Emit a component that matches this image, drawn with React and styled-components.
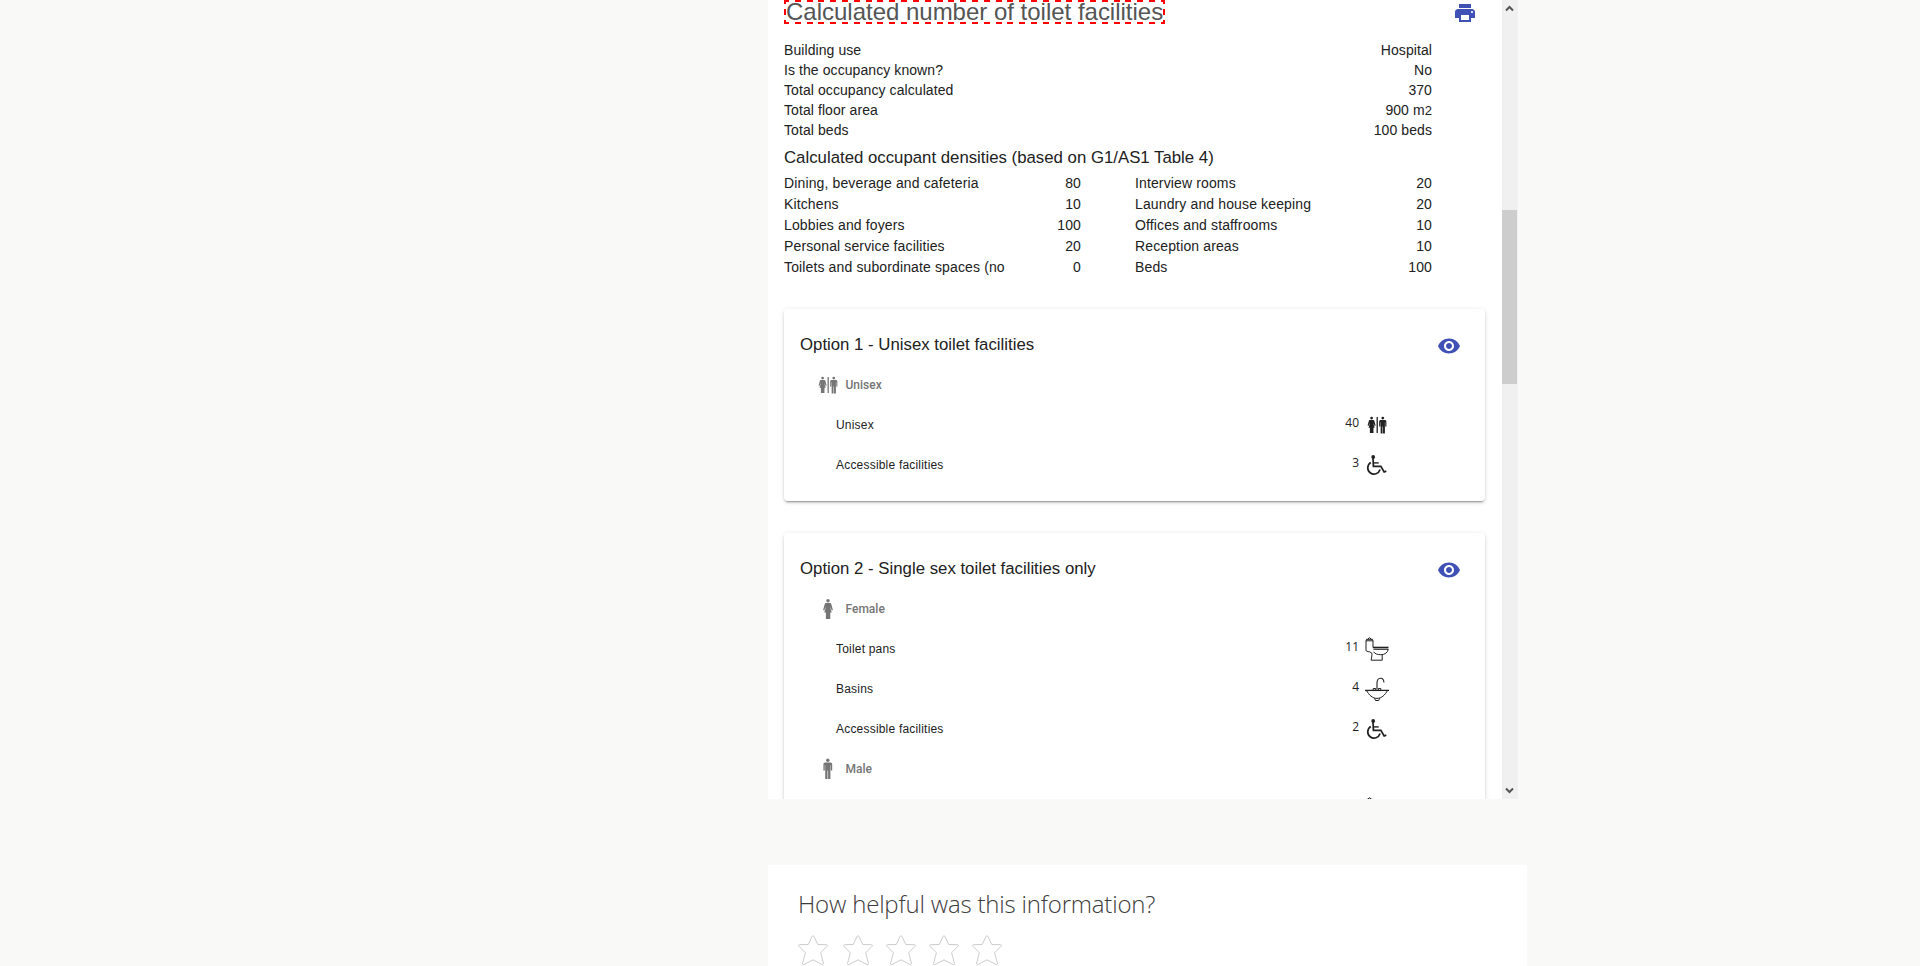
import React from 'react';
import styled, { createGlobalStyle } from 'styled-components';

const Global = createGlobalStyle`
  *, *::before, *::after { box-sizing: border-box; }
  body { margin: 0; background: #f9f9f7; overflow: hidden; }
`;

const Page = styled.main`
  height: 966px;
  padding-left: 768px;
  overflow: hidden;
  background: #f9f9f7;
  color: #212121;
  font-family: 'Liberation Sans', Arial, sans-serif;
`;

const Calculator = styled.section`
  display: flex;
  width: 750px;
  height: 799px;
  overflow: hidden;
  background: #fff;
`;

const Content = styled.div`
  flex: 1;
  min-width: 0;
  padding: 0 17px 0 16px;
`;

const Header = styled.header`
  display: flex;
  justify-content: space-between;
  align-items: flex-start;
  height: 40px;
  padding-right: 8.5px;
`;

const Title = styled.h1`
  --across: repeating-linear-gradient(90deg, #f00 0 6px, transparent 6px 11.81px);
  --down: repeating-linear-gradient(180deg, #f00 0 5px, transparent 5px 10.5px);
  margin: 0;
  width: 381px;
  height: 24px;
  padding: 2px;
  background:
    var(--across) -1px 0 / 383px 2px no-repeat,
    var(--across) -1px 100% / 383px 2px no-repeat,
    var(--down) 0 -1px / 2px 26px no-repeat,
    var(--down) 100% -1px / 2px 26px no-repeat;
  color: #555;
  font-size: 24px;
  font-weight: 400;
  line-height: 20px;
  letter-spacing: -0.01px;
  white-space: nowrap;
`;

const IconButton = styled.button`
  display: block;
  width: 24px;
  height: 24px;
  margin: ${(p) => p.$top || 0}px 0 0;
  padding: 0;
  border: 0;
  background: none;
  color: #3f51b5;

  svg { display: block; width: 24px; height: 24px; fill: currentColor; }
`;

const Summary = styled.dl`
  margin: 0;
  padding-right: 53px;
  font-size: 14px;
  line-height: 20px;
  letter-spacing: 0.08px;
`;

const SummaryRow = styled.div`
  display: flex;
  justify-content: space-between;

  dt, dd { margin: 0; white-space: nowrap; }
  small { font-size: 13px; line-height: 1; }
`;

const Subtitle = styled.h2`
  margin: 0;
  padding-top: 6px;
  height: 33px;
  font-size: 16.8px;
  font-weight: 400;
  line-height: 24px;
`;

const Densities = styled.div`
  display: grid;
  grid-template-columns: 297px 297px;
  column-gap: 54px;
  padding-right: 53px;
  height: 136px;
`;

const DensityList = styled(Summary)`
  padding: 0;
  line-height: 21px;
  letter-spacing: 0.13px;
`;

const Card = styled.article`
  margin-bottom: 32px;
  padding: 0 16px 16px;
  border-radius: 4px;
  background: #fff;
  box-shadow: 0 3px 1px -2px rgba(0, 0, 0, 0.2), 0 2px 2px 0 rgba(0, 0, 0, 0.14),
    0 1px 5px 0 rgba(0, 0, 0, 0.12);
`;

const CardHeader = styled.header`
  display: flex;
  justify-content: space-between;
  height: 56px;
  padding-right: 8.5px;

  h3 {
    margin: 0;
    padding-top: 24px;
    font-size: 16.8px;
    font-weight: 400;
    line-height: 24px;
  }
`;

const GroupHeading = styled.div`
  display: flex;
  align-items: center;
  height: 40px;
  padding-left: 16px;
  gap: 5.5px;
  color: #757575;
  font: 500 12px/16px Roboto, sans-serif;

  svg { display: block; width: 24px; height: 24px; }
`;

const FacilityRow = styled.div`
  display: flex;
  align-items: center;
  height: 40px;
  padding: 0 80px 0 36px;
  font-size: 12px;
  line-height: 16px;
  letter-spacing: 0.2px;
`;

const Count = styled.span`
  margin: 0 6px 4px auto;
  font-family: 'Open Sans', sans-serif;
  font-size: 12px;
  letter-spacing: 0;
`;

const FacilityIcon = styled.svg`
  display: block;
  width: 24px;
  height: 24px;
`;

const Scrollbar = styled.div`
  display: flex;
  flex-direction: column;
  justify-content: space-between;
  width: 16px;
  background: #f0f0f0;

  svg { display: block; width: 15px; height: 16px; fill: none; stroke: #555; stroke-width: 2; }
`;

const Track = styled.div`
  flex: 1;
  padding-top: 194px;
`;

const Thumb = styled.div`
  width: 15px;
  height: 174px;
  background: #cdcdcd;
`;

const Feedback = styled.section`
  width: 759px;
  height: 120px;
  margin-top: 66px;
  padding: 21px 30px 0;
  background: #fff;

  h2 {
    margin: 0;
    height: 49px;
    color: #3c3c3c;
    font: 300 24px/36px 'Open Sans', sans-serif;
    letter-spacing: -0.19px;
    white-space: nowrap;
  }
`;

const Stars = styled.div`
  display: flex;
  gap: 13px;

  svg { display: block; width: 30px; height: 31px; fill: #fff; stroke: #ccc; }
  svg:first-child { margin-right: 2px; }
`;

const Woman = ({ x = 0, y = 0, s = 1 }) => (
  <g transform={`translate(${x} ${y}) scale(${s})`} fill="currentColor">
    <circle cx="5" cy="1.8" r="1.7" />
    <path d="M3.2 4h3.6c.9 0 1.3.5 1.5 1.2L9.9 11l-1.1.5-1.4-3.500v1.100l1.300 4.400H7.300V20H2.900v-6.500H1.300l1.300-4.400V8l-1.400 3.500L.1 11l1.600-5.800C1.900 4.500 2.300 4 3.200 4z" />
  </g>
);

const Man = ({ x = 0, y = 0, s = 1 }) => (
  <g transform={`translate(${x} ${y}) scale(${s})`} fill="currentColor">
    <circle cx="4.6" cy="1.8" r="1.7" />
    <path d="M2.2 4H7c1.2 0 2 .8 2 2v6H7.6V6.8h-.4V20.5H4.9V12h-.6v8.500H2V6.8h-.4V12H.2V6c0-1.200.8-2 2-2z" />
  </g>
);

const icons = {
  unisex: (
    <>
      <Woman x={2.5} y={3.6} s={0.82} />
      <path d="M12.200 4v16" stroke="currentColor" strokeWidth="1.300" />
      <Man x={14} y={3.6} s={0.82} />
    </>
  ),
  female: <Woman x={7} y={2} />,
  male: <Man x={7.2} y={1.5} />,
  accessible: (
    <g fill="none" stroke="currentColor" transform="translate(-.5 -.4)">
      <circle cx="8.700" cy="4.400" r="1.900" fill="currentColor" stroke="none" />
      <path d="M8.500 5.500l.4 8.200h7.500l3.200 5.700 2.200-.9" strokeWidth="1.700" />
      <path d="M9 10.300h5.200" strokeWidth="1.400" />
      <path d="M6.300 9.800A6.300 6.300 0 1 0 15.600 17" strokeWidth="1.700" />
    </g>
  ),
  pan: (
    <g fill="none" stroke="currentColor" strokeWidth="1">
      <path d="M8 10.500V3.800H1v9.400c0 1 1.500 1.400 3.600 1.600L6.700 16c.7 1.500-.2 4-.5 7.200h11V18M1 3.800l.6-1.500h5.800L8 3.800M2.500 2.300L4.500.7l2 1.600" />
      <path d="M8 10.500h15.500" strokeWidth="1.600" />
      <path d="M8.500 12.300h14.800c-.8 3.400-3.500 5.400-7.500 5.400-3.300 0-6-.8-7.300-3" />
    </g>
  ),
  basin: (
    <g fill="none" stroke="currentColor" strokeWidth="1">
      <path d="M0 13.400h24" strokeWidth="1.300" />
      <path d="M1.500 13.500C4 18 7.500 21.400 12 21.400S20 18 22.500 13.500M9.500 21.200l1 2.300h3.200l1-2.300" />
      <path d="M12 12.500V6c0-3 1.200-4.800 3.500-4.800 2.200 0 3.400 1.500 3.400 4.300" strokeWidth="1.100" />
      <path d="M8.200 13v-1.500h2.500V13M13.400 13v-1.500h2.400V13" strokeWidth="1" />
    </g>
  ),
};

const Glyph = ({ name }) => (
  <FacilityIcon viewBox="0 0 24 24" aria-hidden="true">{icons[name]}</FacilityIcon>
);

const summary = [
  ['Building use', 'Hospital'],
  ['Is the occupancy known?', 'No'],
  ['Total occupancy calculated', '370'],
  ['Total floor area', <>900 m<small>2</small></>],
  ['Total beds', '100 beds'],
];

const densities = [
  [
    ['Dining, beverage and cafeteria', '80'],
    ['Kitchens', '10'],
    ['Lobbies and foyers', '100'],
    ['Personal service facilities', '20'],
    ['Toilets and subordinate spaces (no', '0'],
  ],
  [
    ['Interview rooms', '20'],
    ['Laundry and house keeping', '20'],
    ['Offices and staffrooms', '10'],
    ['Reception areas', '10'],
    ['Beds', '100'],
  ],
];

const options = [
  {
    title: 'Option 1 - Unisex toilet facilities',
    groups: [
      { name: 'Unisex', icon: 'unisex', rows: [['Unisex', 40, 'unisex'], ['Accessible facilities', 3, 'accessible']] },
    ],
  },
  {
    title: 'Option 2 - Single sex toilet facilities only',
    groups: [
      {
        name: 'Female',
        icon: 'female',
        rows: [['Toilet pans', 11, 'pan'], ['Basins', 4, 'basin'], ['Accessible facilities', 2, 'accessible']],
      },
      { name: 'Male', icon: 'male', rows: [['', '', 'pan']] },
    ],
  },
];

const Rows = ({ items }) =>
  items.map(([label, value]) => (
    <SummaryRow key={label}>
      <dt>{label}</dt>
      <dd>{value}</dd>
    </SummaryRow>
  ));

export default function App() {
  return (
    <>
      <Global />
      <Page>
        <Calculator>
          <Content>
            <Header>
              <Title>Calculated number of toilet facilities</Title>
              <IconButton $top={1} aria-label="Print">
                <svg viewBox="0 0 24 24">
                  <path d="M19 8H5c-1.660 0-3 1.340-3 3v6h4v4h12v-4h4v-6c0-1.660-1.340-3-3-3zm-3 11H8v-5h8v5zm3-7c-.55 0-1-.45-1-1s.45-1 1-1 1 .45 1 1-.45 1-1 1zm-1-9H6v4h12V3z" />
                </svg>
              </IconButton>
            </Header>
            <Summary><Rows items={summary} /></Summary>
            <Subtitle>Calculated occupant densities (based on G1/AS1 Table 4)</Subtitle>
            <Densities>
              {densities.map((items, i) => (
                <DensityList key={i}><Rows items={items} /></DensityList>
              ))}
            </Densities>
            {options.map((option) => (
              <Card key={option.title}>
                <CardHeader>
                  <h3>{option.title}</h3>
                  <IconButton $top={25} aria-label="View">
                    <svg viewBox="0 0 24 24">
                      <path d="M12 4.500C7 4.500 2.730 7.610 1 12c1.730 4.390 6 7.500 11 7.500s9.270-3.110 11-7.500c-1.730-4.390-6-7.500-11-7.500zM12 17c-2.760 0-5-2.240-5-5s2.240-5 5-5 5 2.240 5 5-2.240 5-5 5zm0-8c-1.660 0-3 1.340-3 3s1.340 3 3 3 3-1.340 3-3-1.340-3-3-3z" />
                    </svg>
                  </IconButton>
                </CardHeader>
                {option.groups.map((group) => (
                  <React.Fragment key={group.name}>
                    <GroupHeading><Glyph name={group.icon} />{group.name}</GroupHeading>
                    {group.rows.map(([label, count, icon]) => (
                      <FacilityRow key={label}>
                        <span>{label}</span>
                        <Count>{count}</Count>
                        <Glyph name={icon} />
                      </FacilityRow>
                    ))}
                  </React.Fragment>
                ))}
              </Card>
            ))}
          </Content>
          <Scrollbar>
            <svg viewBox="0 0 15 16"><path d="M4 10.500l3.500-3.500 3.500 3.500" /></svg>
            <Track><Thumb /></Track>
            <svg viewBox="0 0 15 16"><path d="M4 5.500L7.500 9 11 5.500" /></svg>
          </Scrollbar>
        </Calculator>
        <Feedback>
          <h2>How helpful was this information?</h2>
          <Stars>
            {[1, 2, 3, 4, 5].map((n) => (
              <svg key={n} viewBox="0 0 30 31" strokeLinejoin="round">
                <path d="M14.200 1.200q.8-1.200 1.600 0l4 8.300 8.900.2q1.300.3.400 1.500l-6.500 6.600 2.900 10.700q0 1.500-1.400 1.100L15 24.800l-9.100 4.800q-1.400.4-1.400-1.100l2.900-10.700L.9 11.200q-.9-1.200.4-1.500l8.900-.2z" />
              </svg>
            ))}
          </Stars>
        </Feedback>
      </Page>
    </>
  );
}
